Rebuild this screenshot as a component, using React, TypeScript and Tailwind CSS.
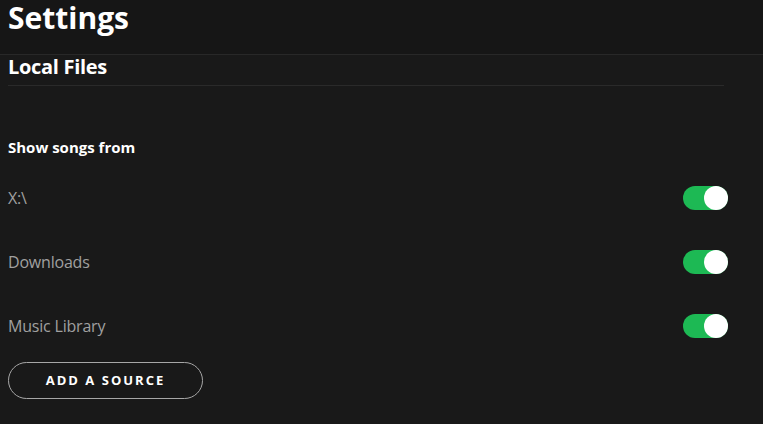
import React from "react";

function Toggle() {
  return (
    <div className="relative w-[45px] h-[24px] rounded-full bg-[#1db954]">
      <div className="absolute right-0 top-0 w-[24px] h-[24px] rounded-full bg-white" />
    </div>
  );
}

const rows = ["X:\\", "Downloads", "Music Library"];

export default function App() {
  return (
    <div className="w-[763px] h-[424px] bg-[#191919] overflow-hidden" style={{ fontFamily: "'Open Sans', 'Noto Sans', sans-serif" }}>
      <div className="h-[55px] bg-[#161616] border-b border-[#282828] pl-[8px] pt-[1px]">
        <h1 className="text-[30px] leading-[34px] font-bold text-white">Settings</h1>
      </div>
      <div className="pl-[8px] pr-[35px]">
        <div className="h-[31px] border-b border-[#2a2a2a] mr-[4px]">
          <h2 className="text-[20px] leading-[24px] font-bold text-white tracking-[-0.3px]">Local Files</h2>
        </div>
        <div className="mt-[51px] text-[15px] leading-[20px] font-bold text-white">Show songs from</div>
        <div className="mt-[29px] flex flex-col gap-[40px]">
          {rows.map((r) => (
            <div key={r} className="flex items-center justify-between h-[24px]">
              <span className="text-[16px] text-[#a0a0a0] tracking-[-0.2px]">{r}</span>
              <Toggle />
            </div>
          ))}
        </div>
        <button className="mt-[24px] w-[195px] h-[37px] rounded-full border-[1.5px] border-[#a7a7a7] text-white text-[13px] font-bold tracking-[2px]">
          ADD A SOURCE
        </button>
      </div>
    </div>
  );
}
